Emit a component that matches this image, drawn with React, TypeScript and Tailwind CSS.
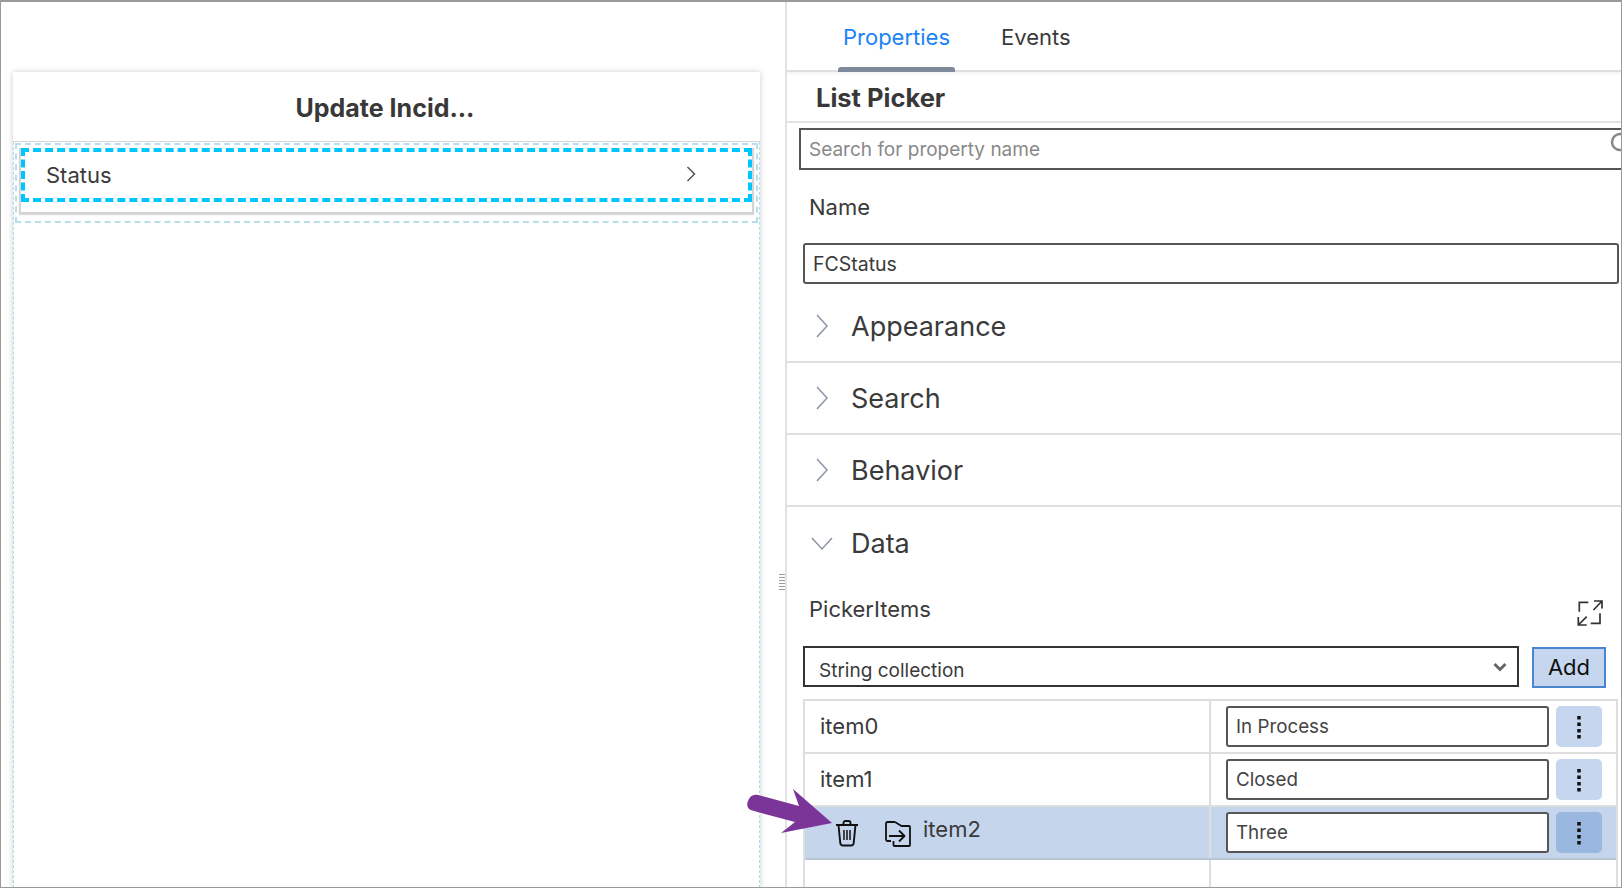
import React from "react";

const font = { fontFamily: "Inter, 'Liberation Sans', sans-serif" };

function Chevron({ open }: { open?: boolean }) {
  return (
    <svg width="24" height="24" viewBox="0 0 24 24" fill="none" stroke="#8a94a3" strokeWidth="1.5" className="shrink-0">
      {open ? <path d="M2 7l10 11 10-11" /> : <path d="M7 1l10 11-10 11" />}
    </svg>
  );
}

function Section({ title, open }: { title: string; open?: boolean }) {
  return (
    <div className={`h-[72px] flex items-center pl-[23px] gap-[17px] ${open ? "" : "border-b-2 border-[#dfdfdf]"}`}>
      <span className="w-[24px] flex justify-center"><Chevron open={open} /></span>
      <span className={`text-[27px] text-[#3a3a3a] leading-none ${open ? "" : "pt-[1px]"}`}>{title}</span>
    </div>
  );
}

function Dots() {
  return (
    <svg width="6" height="24" viewBox="0 0 6 24" fill="#111">
      <rect x="1.25" y="1" width="3.5" height="3.5" />
      <rect x="1.25" y="7.5" width="3.5" height="3.5" />
      <rect x="1.25" y="14" width="3.5" height="3.5" />
      <rect x="1.25" y="20" width="3.5" height="3.5" />
    </svg>
  );
}

function Row({ label, value, active }: { label?: string; value: string; active?: boolean }) {
  return (
    <div className={`h-[53px] flex border-b-2 ${active ? "bg-[#c4d5ec] border-[#b9c4d2]" : "border-[#dedede]"}`}>
      <div className="w-[406px] flex items-center pl-[15px] border-r-2 border-[#dedede]">
        {active ? (
          <>
            <svg width="24" height="27" viewBox="0 0 24 27" fill="none" stroke="#111" strokeWidth="1.9" className="ml-[15px] mt-[2px] shrink-0">
              <path d="M1 5h22" strokeWidth="2" />
              <path d="M8.500 4V3c0-1 .7-2 2-2h3c1.300 0 2 1 2 2v1" />
              <path d="M3.500 5l1.800 18c.1 1.600 1 2.500 2.700 2.500h8c1.700 0 2.600-.9 2.700-2.500L20.500 5" />
              <path d="M9 10v10M12 10v10M15 10v10" strokeWidth="1.5" />
            </svg>
            <svg width="26" height="26" viewBox="0 0 26 26" fill="none" stroke="#111" strokeWidth="1.8" strokeLinejoin="round" className="ml-[26px] mt-[2px] shrink-0">
              <path d="M10 1H2.500a1.500 1.500 0 0 0-1.500 1.500v16a1.500 1.500 0 0 0 1.500 1.500H6" />
              <path d="M10 1l6.500 4H24a1 1 0 0 1 1 1v18a1 1 0 0 1-1 1H9.500a1 1 0 0 1-1-1v-4" />
              <path d="M4 15h15M14 9.500l5.500 5.500-5.500 5.500" />
            </svg>
            <span className="ml-[12px] mb-[6px] text-[22px] text-[#3a3a3a]">{label}</span>
          </>
        ) : (
          <span className="text-[22px] text-[#3a3a3a]">{label}</span>
        )}
      </div>
      <div className="flex-1 flex items-start pt-[5px] pl-[15px]">
        <input
          readOnly
          value={value}
          className="w-[323px] h-[41px] rounded-[3px] border-2 border-[#555] bg-white px-[8px] text-[18.800px] text-[#444] outline-none"
          style={font}
        />
        <div className={`ml-[7px] w-[46px] h-[41px] rounded-[5px] flex items-center justify-center ${active ? "bg-[#99b7df]" : "bg-[#c5d6ee]"}`}>
          <Dots />
        </div>
      </div>
    </div>
  );
}

export default function App() {
  return (
    <div className="w-[1622px] h-[888px] flex overflow-hidden bg-white border-t-2 border-l border-r border-b border-[#9a9a9a]" style={font}>
      <div className="w-[784px] shrink-0 relative">
        <div className="ml-[12px] mr-[25px] mt-[70px] h-[816px] bg-white shadow-[0_0_6px_rgba(0,0,0,0.2)] flex flex-col">
          <div className="h-[70px] shrink-0 flex items-center justify-center border-b border-[#d5d5d5] pt-[4px]">
            <span className="text-[25px] font-bold text-[#383838] ml-[-3px]">Update Incid...</span>
          </div>
          <div className="flex-1 border-x border-dashed border-[#a9dcec] pt-[1px] px-[1px]">
            <div className="h-[80px] border-2 border-dashed border-[#b8deeb] pt-[3px] px-[2px]">
              <div className="h-[66px] border-2 border-t-0 border-[#d4d4d4] shadow-[0_1px_1px_rgba(0,0,0,0.15)]">
                <div className="h-[54px] border-[4px] border-dashed border-[#00c6ff] flex items-center justify-between pl-[21px] pr-[52px]">
                  <span className="text-[22px] text-[#3a3a3a]">Status</span>
                  <svg width="10" height="16" viewBox="0 0 10 16" fill="none" stroke="#555" strokeWidth="1.5" className="mb-[2px]">
                    <path d="M1.500 1l7 7-7 7" />
                  </svg>
                </div>
              </div>
            </div>
          </div>
        </div>
        <div className="absolute right-[0px] top-[572px] w-[6px] h-[16px] flex flex-col justify-between">
          {[0, 1, 2, 3, 4, 5].map((i) => (
            <div key={i} className="h-[1px] bg-[#9a9a9a]" />
          ))}
        </div>
      </div>

      <div className="flex-1 min-w-0 border-l-2 border-[#e2e2e2] relative overflow-hidden">
        <div className="h-[70px] border-b-2 border-[#e0e0e0] flex pl-[51px] shadow-[0_2px_3px_rgba(0,0,0,0.05)]">
          <div className="w-[117px] relative flex justify-center pt-[19px]">
            <span className="text-[22px] text-[#1a82f7]">Properties</span>
            <div className="absolute left-0 right-0 bottom-[-2px] h-[5px] rounded-t-[3px] bg-[#7d8a9a]" />
          </div>
          <div className="ml-[46px] pt-[19px]">
            <span className="text-[22px] text-[#3a3a3a]">Events</span>
          </div>
        </div>
        <div className="h-[51px] border-b-2 border-[#e3e3e3] flex items-center pl-[29px] pt-[3px]">
          <span className="text-[25.500px] font-bold text-[#383838]">List Picker</span>
        </div>
        <div className="pl-[12px] mt-[5px] relative">
          <input
            readOnly
            placeholder="Search for property name"
            className="w-[840px] h-[42px] border-2 border-[#555] px-[8px] text-[19px] placeholder:text-[#888] outline-none"
            style={font}
          />
          <svg width="24" height="24" viewBox="0 0 24 24" fill="none" stroke="#888" strokeWidth="2.5" className="absolute left-[822px] top-[4px]">
            <circle cx="11" cy="10" r="8" />
          </svg>
        </div>
        <div className="pl-[22px] h-[73px] flex items-center text-[22px] text-[#3a3a3a] pt-[1px]">Name</div>
        <div className="pl-[16px] pr-[2px]">
          <input
            readOnly
            value="FCStatus"
            className="w-full h-[41px] rounded-[3px] border-2 border-[#555] px-[8px] text-[19.500px] text-[#3a3a3a] outline-none"
            style={font}
          />
        </div>
        <div className="mt-[7px]">
          <Section title="Appearance" />
          <Section title="Search" />
          <Section title="Behavior" />
          <Section title="Data" open />
        </div>
        <div className="flex items-center justify-between pl-[22px] pr-[16px] h-[60px]">
          <span className="text-[22px] text-[#3a3a3a]">PickerItems</span>
          <svg width="28" height="28" viewBox="0 0 28 28" fill="none" stroke="#333" strokeWidth="1.7" className="mt-[9px]">
            <path d="M2.300 11.700V2.300h9" />
            <path d="M17 1h8v7.500M25 1l-8.500 9" />
            <path d="M1.300 17v8h8.400M1.300 25l8.400-8.300" />
            <path d="M23 13.300v10h-9.300" />
          </svg>
        </div>
        <div className="flex pl-[16px] h-[42px] mt-[7px]">
          <div className="w-[716px] h-[41px] border-2 border-[#333] flex items-center justify-between pl-[14px] pr-[10px]">
            <span className="text-[19px] text-[#3a3a3a] pt-[10px]">String collection</span>
            <svg width="14" height="10" viewBox="0 0 14 10" fill="none" stroke="#666" strokeWidth="3">
              <path d="M1.500 2l5.500 5.500L12.500 2" />
            </svg>
          </div>
          <div className="ml-[13px] mt-[1px] w-[74px] h-[41px] bg-[#c5d6ee] border-2 border-[#4a86cf] flex items-center justify-center text-[22px] text-[#111]">
            Add
          </div>
        </div>
        <div className="ml-[16px] mr-[3px] mt-[11px] border-2 border-b-0 border-[#dedede] h-[200px] relative">
          <Row label="item0" value="In Process" />
          <Row label="item1" value="Closed" />
          <Row label="item2" value="Three" active />
          <div className="w-[406px] h-[40px] border-r-2 border-[#dedede]" />
        </div>
      </div>

      <svg width="100" height="60" viewBox="0 0 100 60" className="absolute left-[740px] top-[782px]">
        <path
          d="M53 7L92 41 41 51 55 40 14 29C8 28 6 24 8 19 10 14 13 12 18 13L59 24Z"
          fill="#7b3498"
        />
      </svg>
    </div>
  );
}
